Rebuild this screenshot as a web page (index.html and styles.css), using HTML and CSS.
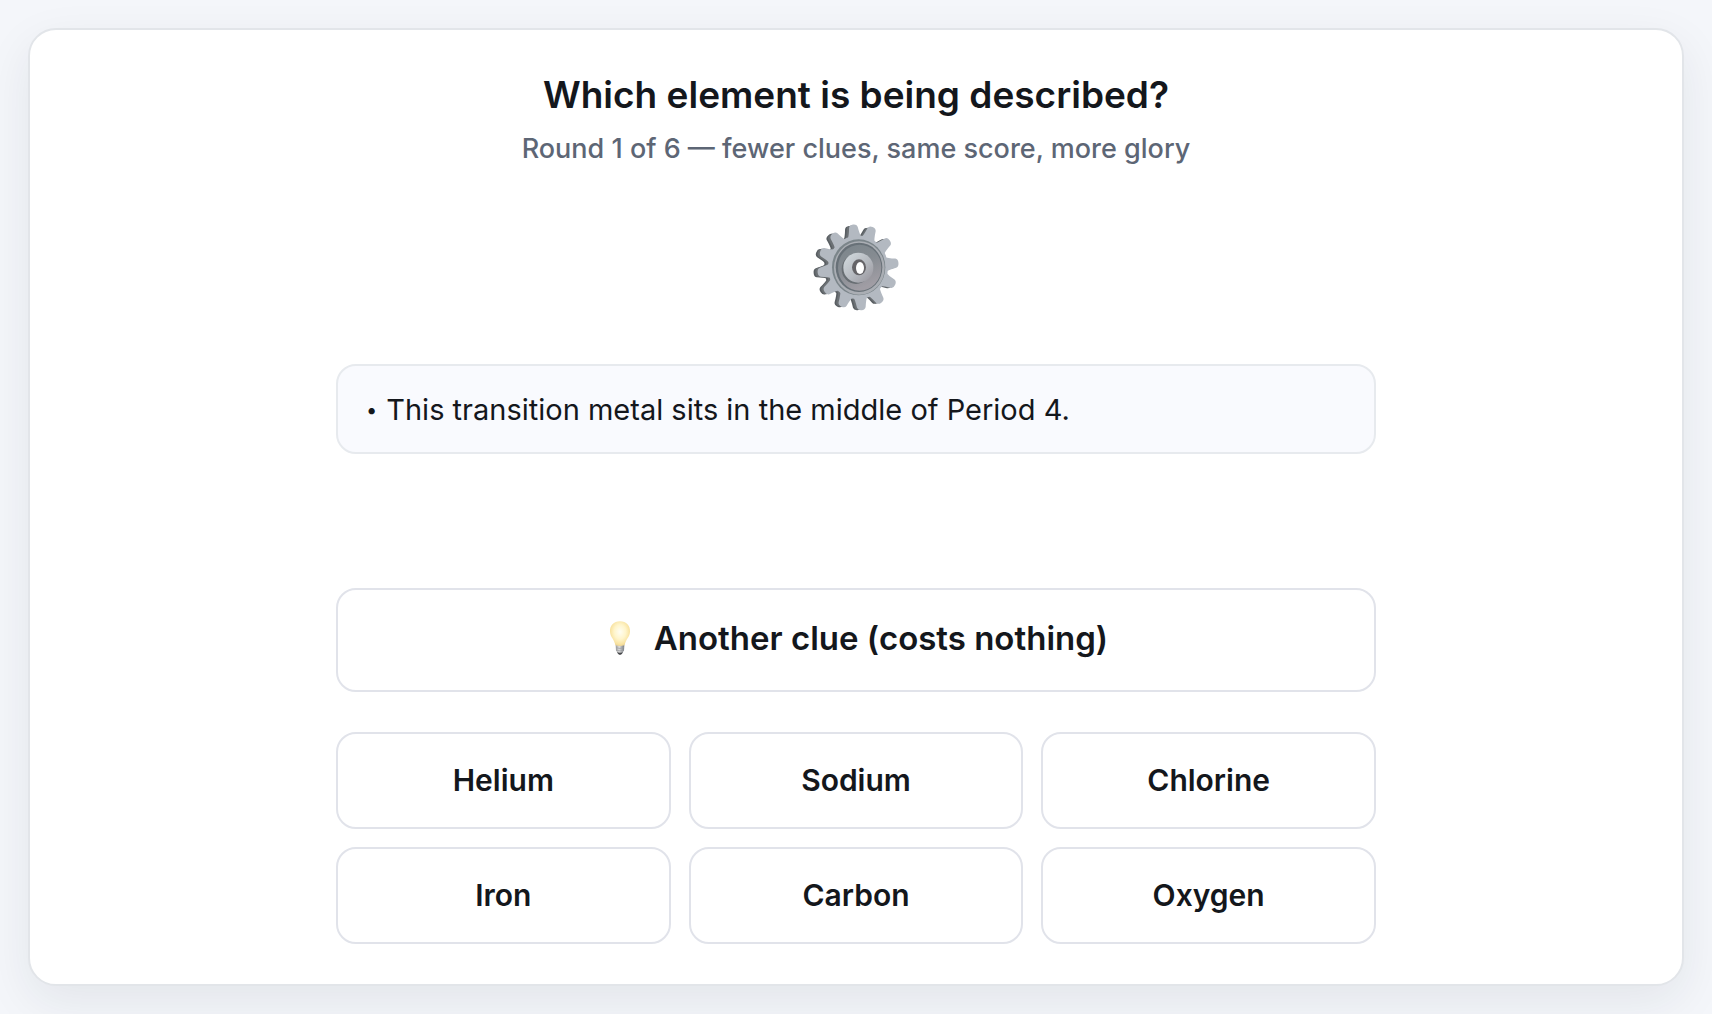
FILE: index.html
```
<!DOCTYPE html>
<html lang="en">
<head>
<meta charset="utf-8">
<meta name="viewport" content="width=device-width, initial-scale=1">
<title>Which element is being described?</title>
<link rel="stylesheet" href="styles.css">
</head>
<body>
<main class="card">
  <h1 class="title">Which element is being described?</h1>
  <p class="subtitle">Round 1 of 6 — fewer clues, same score, more glory</p>

  <svg class="gear" viewBox="66 40 264 264" aria-hidden="true">
    <defs>
      <linearGradient id="dish" x1="0" y1="0" x2="0.4" y2="1">
        <stop offset="0" stop-color="#7b858b"/>
        <stop offset="0.5" stop-color="#858b91"/>
        <stop offset="1" stop-color="#a09da4"/>
      </linearGradient>
      <linearGradient id="hub" x1="0" y1="0" x2="1" y2="1">
        <stop offset="0" stop-color="#d5dde1"/>
        <stop offset="0.55" stop-color="#b5b9bf"/>
        <stop offset="1" stop-color="#96939b"/>
      </linearGradient>
      <path id="tooth" d="M-22 -80Q-16 -92 -13 -114Q-11 -122 0 -122Q11 -122 13 -114Q16 -92 22 -80Z"/>
      <g id="wheel">
        <circle r="90"/>
        <use href="#tooth" transform="rotate(-7)"/>
        <use href="#tooth" transform="rotate(21)"/>
        <use href="#tooth" transform="rotate(51)"/>
        <use href="#tooth" transform="rotate(84)"/>
        <use href="#tooth" transform="rotate(114)"/>
        <use href="#tooth" transform="rotate(145)"/>
        <use href="#tooth" transform="rotate(175)"/>
        <use href="#tooth" transform="rotate(204)"/>
        <use href="#tooth" transform="rotate(235)"/>
        <use href="#tooth" transform="rotate(263)"/>
        <use href="#tooth" transform="rotate(292)"/>
        <use href="#tooth" transform="rotate(321)"/>
      </g>
    </defs>
    <use href="#wheel" transform="translate(192 172) scale(1 1.04)" fill="#595e62"/>
    <use href="#wheel" transform="translate(197 171) scale(1 1.04)" fill="#6b7074"/>
    <use href="#wheel" transform="translate(204 170) scale(1 1.06)" fill="#b3b9c1"/>
    <ellipse cx="206" cy="170" rx="80" ry="84" fill="#7b858a"/>
    <ellipse cx="208" cy="172" rx="76" ry="80" fill="#aaaeb4"/>
    <ellipse cx="207" cy="170" rx="70" ry="74" fill="#687178"/>
    <ellipse cx="209" cy="171" rx="65" ry="69" fill="url(#dish)"/>
    <ellipse cx="198" cy="175" rx="43" ry="45" fill="#686e73"/>
    <circle cx="205" cy="171" r="45" fill="url(#hub)"/>
    <ellipse cx="207" cy="170" rx="21" ry="24" fill="#656468"/>
    <ellipse cx="210" cy="172" rx="12" ry="18" fill="#fff"/>
  </svg>

  <section class="panel">
    <ul class="clues">
      <li class="clue"><span class="bullet">•</span><span>This transition metal sits in the middle of Period 4.</span></li>
    </ul>

    <button class="button hint" type="button">
      <svg class="bulb" viewBox="36 60 96 102" aria-hidden="true">
        <defs>
          <radialGradient id="glow" cx="0.5" cy="0.42" r="0.58">
            <stop offset="0" stop-color="#fffef3"/>
            <stop offset="0.5" stop-color="#fff5cb"/>
            <stop offset="0.85" stop-color="#f8e2a0"/>
            <stop offset="1" stop-color="#e7cd8f"/>
          </radialGradient>
          <linearGradient id="base" x1="0" y1="0" x2="1" y2="0">
            <stop offset="0" stop-color="#999"/>
            <stop offset="0.4" stop-color="#ddd"/>
            <stop offset="1" stop-color="#777b80"/>
          </linearGradient>
        </defs>
        <path d="M84 61C65 61 53 75 54 92C55 109 67 114 70 133Q84 140 98 133C101 114 113 109 114 92C115 75 103 61 84 61Z" fill="url(#glow)"/>
        <path d="M71 133Q84 138 97 133L96 149Q92 156 84 156Q76 156 72 149Z" fill="url(#base)"/>
        <path d="M72 140Q84 145 96 140M72 147Q84 152 96 147" fill="none" stroke="#999ca0" stroke-width="2"/>
        <path d="M75 153Q84 158 93 153Q91 161 84 162Q77 161 75 153Z" fill="#494b4e"/>
      </svg>
      <span>Another clue (costs nothing)</span>
    </button>

    <div class="options">
      <button class="button option" type="button">Helium</button>
      <button class="button option" type="button">Sodium</button>
      <button class="button option" type="button">Chlorine</button>
      <button class="button option" type="button">Iron</button>
      <button class="button option" type="button">Carbon</button>
      <button class="button option" type="button">Oxygen</button>
    </div>
  </section>
</main>
</body>
</html>
```
FILE: styles.css
```
* {
  box-sizing: border-box;
}

body {
  margin: 0;
  padding: 28px;
  background: #f4f6fa;
  color: #14171c;
  font-family: Inter, "Liberation Sans", sans-serif;
}

.card {
  display: flex;
  flex-direction: column;
  align-items: center;
  padding: 40px;
  border: 2px solid #e2e5e9;
  border-radius: 28px;
  background: #fff;
  box-shadow: 0 16px 48px rgba(20, 36, 45, 0.08);
}

.title {
  margin: 0;
  font-size: 37px;
  font-weight: 600;
  line-height: 50px;
}

.subtitle {
  margin: 4px 0 0;
  color: #5d6675;
  font-size: 27px;
  font-weight: 500;
  line-height: 50px;
}

.gear {
  width: 88px;
  height: 88px;
  margin: 50px 0 52px;
}

.panel {
  width: 100%;
  max-width: 1040px;
}

.clues {
  min-height: 184px;
  margin: 0;
  padding: 0;
  list-style: none;
}

.clue {
  display: flex;
  align-items: center;
  gap: 9px;
  padding: 21px 28px 19px;
  border: 2px solid #e7eaee;
  border-radius: 20px;
  background: #f9fafe;
  font-size: 29px;
  line-height: 46px;
}

.bullet {
  font-size: 20px;
}

.button {
  border: 2px solid #e1e3ea;
  border-radius: 20px;
  background: #fff;
  color: inherit;
  font-family: inherit;
  font-weight: 600;
  cursor: pointer;
}

.hint {
  display: flex;
  align-items: center;
  justify-content: center;
  gap: 18px;
  width: 100%;
  margin: 40px 0;
  padding: 26px 28px 30px;
  font-size: 33px;
  line-height: 44px;
}

.bulb {
  width: 32px;
  height: 34px;
}

.options {
  display: grid;
  grid-template-columns: repeat(3, 1fr);
  gap: 18px;
}

.option {
  padding: 25px;
  font-size: 30px;
  line-height: 43px;
}
```
